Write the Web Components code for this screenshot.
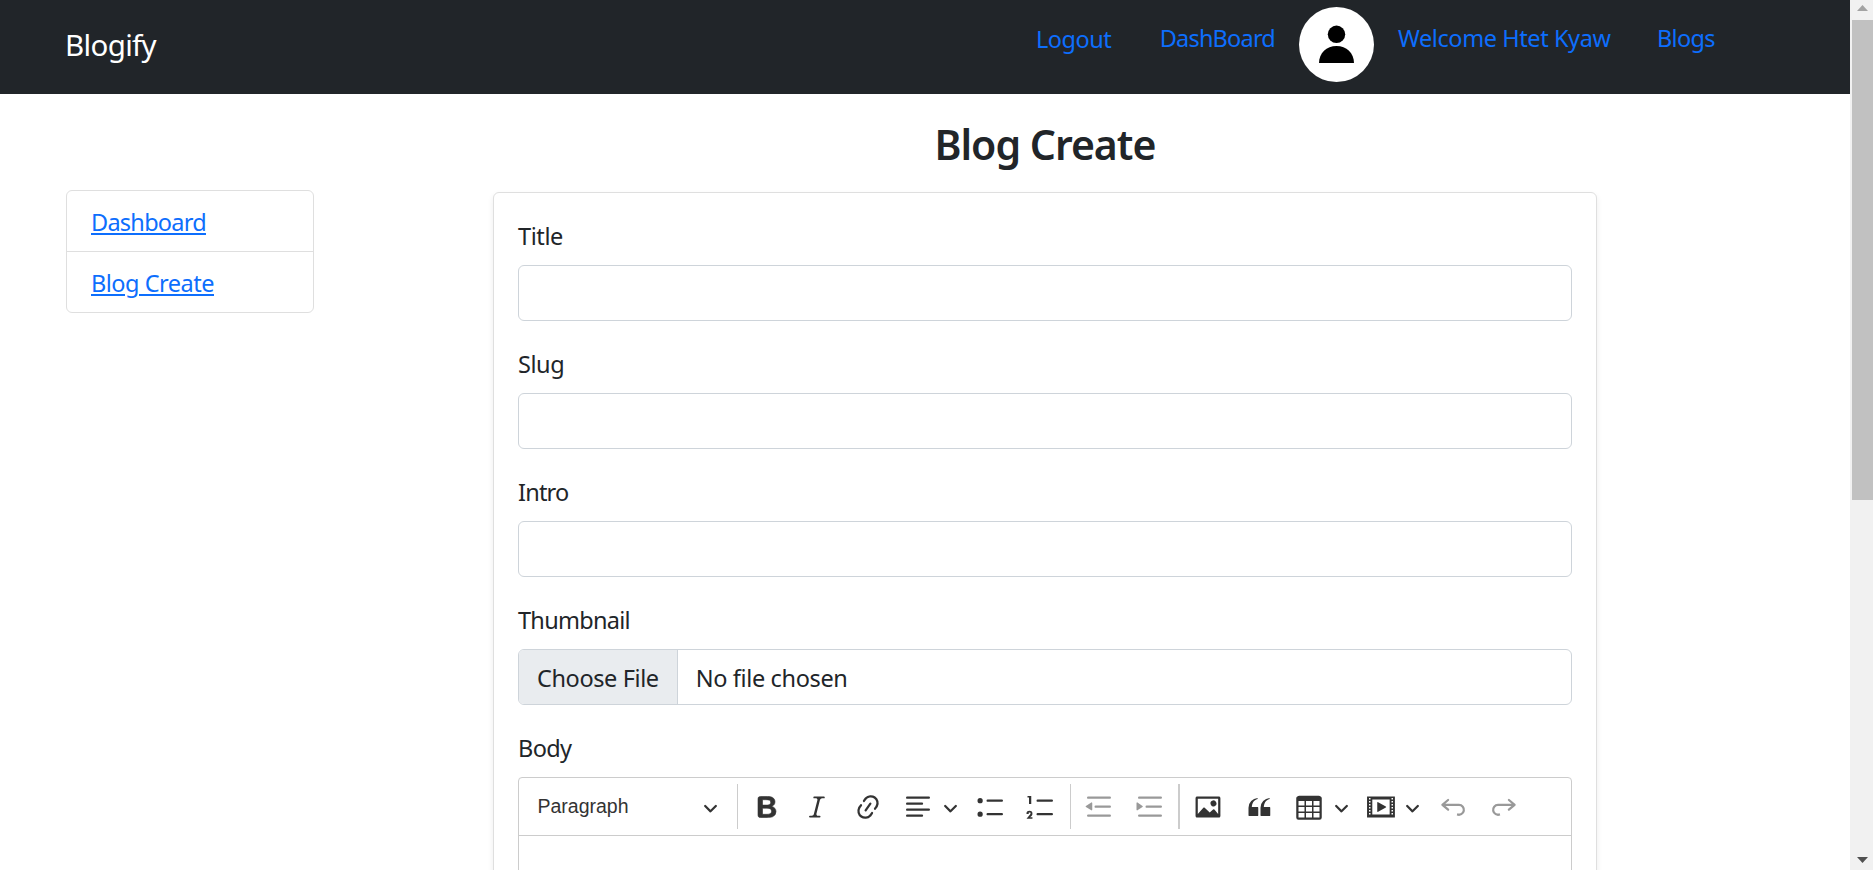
<!DOCTYPE html>
<html lang="en">
<head>
<meta charset="utf-8">
<title>Blogify</title>
<style>
html,body{margin:0;height:870px;overflow:hidden;background:#fff}
body{font-family:"Noto Sans","Open Sans",sans-serif;font-size:23.5px;font-weight:400;line-height:36px;color:#212529}
</style>
</head>
<body>
<blog-app></blog-app>
<script>
const define=(name,html,setup)=>customElements.define(name,class extends HTMLElement{
  connectedCallback(){
    if(this.shadowRoot)return;
    const t=document.createElement('template');
    t.innerHTML=html;
    this.attachShadow({mode:'open'}).appendChild(t.content.cloneNode(true));
    if(setup)setup(this,this.shadowRoot);
  }
});

/* A single line of text whose tracking is adjusted to the advance width in "w". */
define('fit-text','<style>:host{display:inline-block;white-space:nowrap}</style><slot></slot>',el=>{
  const n=el.textContent.length,w=+el.getAttribute('w');
  const fit=()=>{
    el.style.letterSpacing='0px';
    el.style.width='max-content';
    const natural=el.getBoundingClientRect().width;
    el.style.letterSpacing=((w-natural)/n)+'px';
    el.style.width=w+'px';
  };
  fit();
});

const chevron='<path d="M.941 4.523a.75.75 0 1 1 1.06-1.06l3.006 3.005 3.005-3.005a.75.75 0 1 1 1.06 1.06l-3.549 3.55a.75.75 0 0 1-1.168-.136L.941 4.523z"/>';
const line1='M7 5.75c0 .414.336.75.75.75h9.5a.75.75 0 1 0 0-1.5h-9.5a.75.75 0 0 0-.75.75z';
const line2='M7 14.75c0 .414.336.75.75.75h9.5a.75.75 0 1 0 0-1.5h-9.5a.75.75 0 0 0-.75.75z';
const dents='M2 3.75c0 .414.336.75.75.75h14.5a.75.75 0 1 0 0-1.5H2.75a.75.75 0 0 0-.75.75zm5 6c0 .414.336.75.75.75h9.5a.75.75 0 1 0 0-1.5h-9.5a.75.75 0 0 0-.75.75zM2.75 16.5h14.5a.75.75 0 1 0 0-1.5H2.75a.75.75 0 1 0 0 1.5z';
const icons={
bold:'M10.187 17H5.773c-.637 0-1.092-.138-1.364-.415-.273-.277-.409-.718-.409-1.323V4.738c0-.617.14-1.062.419-1.332.279-.27.73-.406 1.354-.406h4.68c.69 0 1.288.041 1.793.124.506.083.96.242 1.36.477.341.197.644.447.906.75a3.262 3.262 0 0 1 .808 2.162c0 1.401-.722 2.426-2.167 3.075C15.05 10.175 16 11.315 16 13.01a3.756 3.756 0 0 1-2.296 3.504 6.1 6.1 0 0 1-1.517.377c-.571.073-1.238.11-2 .11zm-.217-6.217H7v4.087h3.069c1.977 0 2.965-.69 2.965-2.072 0-.707-.256-1.22-.768-1.537-.512-.319-1.277-.478-2.296-.478zM7 5.13v3.619h2.606c.729 0 1.292-.067 1.69-.2a1.6 1.6 0 0 0 .91-.765c.165-.267.247-.566.247-.897 0-.707-.26-1.176-.778-1.409-.519-.232-1.31-.348-2.375-.348H7z',
italic:'M9.586 14.633l.021.004c-.036.335.095.655.393.962.082.083.173.15.274.201h1.474a.6.6 0 1 1 0 1.2H5.304a.6.6 0 0 1 0-1.2h1.15c.474-.07.809-.182 1.005-.334.157-.122.291-.32.404-.597l2.416-9.55a1.053 1.053 0 0 0-.281-.823 1.12 1.12 0 0 0-.442-.296H8.15a.6.6 0 0 1 0-1.2h6.443a.6.6 0 1 1 0 1.2h-1.195c-.376.056-.65.155-.823.296-.215.175-.423.439-.623.79l-2.366 9.347z',
link:'m11.077 15 .991-1.416a.75.75 0 1 1 1.229.86l-1.148 1.64a.748.748 0 0 1-.217.206 5.251 5.251 0 0 1-8.503-5.955.741.741 0 0 1 .12-.274l1.147-1.639a.75.75 0 1 1 1.228.86L4.933 10.7l.006.003a3.75 3.75 0 0 0 6.132 4.294l.006.004zm5.494-5.335a.748.748 0 0 1-.12.274l-1.147 1.639a.75.75 0 1 1-1.228-.86l.86-1.23a3.75 3.75 0 0 0-6.144-4.301l-.86 1.229a.75.75 0 0 1-1.229-.86l1.148-1.64a.748.748 0 0 1 .217-.206 5.251 5.251 0 0 1 8.503 5.955zm-4.563-2.532a.75.75 0 0 1 .184 1.045l-3.155 4.505a.75.75 0 1 1-1.229-.86l3.155-4.506a.75.75 0 0 1 1.045-.184z',
align:'M2 3.75c0 .414.336.75.75.75h14.5a.75.75 0 1 0 0-1.5H2.75a.75.75 0 0 0-.75.75zm0 8c0 .414.336.75.75.75h14.5a.75.75 0 1 0 0-1.5H2.75a.75.75 0 0 0-.75.75zm0 4c0 .414.336.75.75.75h9.929a.75.75 0 1 0 0-1.5H2.75a.75.75 0 0 0-.75.75zm0-8c0 .414.336.75.75.75h9.929a.75.75 0 1 0 0-1.5H2.75a.75.75 0 0 0-.75.75z',
bullets:line1+line2+'M1 5.75a1.75 1.75 0 1 1 3.5 0a1.75 1.75 0 0 1-3.5 0zM1 14.75a1.75 1.75 0 1 1 3.5 0a1.75 1.75 0 0 1-3.5 0z',
numbers:line1+line2+'M3.5 3v5H2V3.7H1v-1h2.5V3zM.343 17.857l2.59-3.257H2.92a.6.6 0 1 0-1.04 0H.302a2 2 0 1 1 3.995 0h-.001c-.048.405-.16.734-.333.988-.175.254-.59.692-1.244 1.312H4.3v1h-4l.043-.043z',
outdent:dents+'M4.868 6.95 1.28 9.358a.4.4 0 0 0 .013.661l3.59 2.207A.4.4 0 0 0 5.5 11.892V7.275a.4.4 0 0 0-.632-.326z',
indent:dents+'M1.632 6.95 5.02 9.358a.4.4 0 0 1-.013.661l-3.39 2.207A.4.4 0 0 1 1 11.892V7.275a.4.4 0 0 1 .632-.326z',
image:'M6.91 10.54c.26-.23.64-.21.88.03l3.36 3.14 2.23-2.06a.64.64 0 0 1 .87 0l2.52 2.97V4.5H3.2v10.12l3.71-4.08zm10.27-7.51c.6 0 1.09.47 1.09 1.05v11.84c0 .59-.49 1.06-1.09 1.06H2.79c-.6 0-1.09-.47-1.09-1.06V4.08c0-.58.49-1.05 1.1-1.05h14.38zm-5.22 5.56a1.96 1.96 0 1 1 3.4-1.96 1.96 1.96 0 0 1-3.4 1.96z',
quote:'M3 10.423a6.5 6.5 0 0 1 6.056-6.408l.038.67C6.448 5.423 5.354 7.663 5.22 10H9c.552 0 .5.432.5.986v4.511c0 .554-.448.503-1 .503h-5c-.552 0-.5-.449-.5-1.003v-4.574zm8 0a6.5 6.5 0 0 1 6.056-6.408l.038.67c-2.646.739-3.74 2.979-3.873 5.315H17c.552 0 .5.432.5.986v4.511c0 .554-.448.503-1 .503h-5c-.552 0-.5-.449-.5-1.003v-4.574z',
table:'M3 6v3h4V6H3zm0 4v3h4v-3H3zm0 4v3h4v-3H3zm5 3h4v-3H8v3zm5 0h4v-3h-4v3zm4-4v-3h-4v3h4zm0-4V6h-4v3h4zm1.5 8a1.5 1.5 0 0 1-1.5 1.5H3A1.5 1.5 0 0 1 1.5 17V4c.222-.863 1.068-1.5 2-1.5h13c.932 0 1.778.637 2 1.5v13zM12 13v-3H8v3h4zm0-4V6H8v3h4z',
media:'M18.68 3.03c.6 0 .59-.03.59.55v12.84c0 .59.01.56-.59.56H1.29c-.6 0-.59.03-.59-.56V3.58c0-.58-.01-.55.6-.55h17.38zM15.77 15V5H4.2v10h11.57zM2 4v1h1V4H2zm0 2v1h1V6H2zm0 2v1h1V8H2zm0 2v1h1v-1H2zm0 2v1h1v-1H2zm0 2v1h1v-1H2zM17 4v1h1V4h-1zm0 2v1h1V6h-1zm0 2v1h1V8h-1zm0 2v1h1v-1h-1zm0 2v1h1v-1h-1zm0 2v1h1v-1h-1zM7.5 7.177a.4.4 0 0 1 .593-.351l5.133 2.824a.4.4 0 0 1 0 .7l-5.133 2.824a.4.4 0 0 1-.593-.35V7.176v.001z',
undo:'m5.042 9.367 2.189 1.837a.75.75 0 0 1-.965 1.149l-3.788-3.18a.747.747 0 0 1-.21-.284.75.75 0 0 1 .17-.945L6.23 4.762a.75.75 0 1 1 .964 1.15L4.863 7.866h8.917A.75.75 0 0 1 14 7.9a4 4 0 1 1-1.477 7.718l.344-1.489a2.5 2.5 0 1 0 1.094-4.73l.008-.032H5.042z',
redo:'m14.958 9.367-2.189 1.837a.75.75 0 0 0 .965 1.149l3.788-3.18a.747.747 0 0 0 .21-.284.75.75 0 0 0-.17-.945L13.77 4.762a.75.75 0 1 0-.964 1.15l2.331 1.955H6.22A.75.75 0 0 0 6 7.9a4 4 0 1 0 1.477 7.718l-.344-1.489A2.5 2.5 0 1 1 6.039 9.4l-.008-.032h8.927z'
};
/* Toolbar glyph: "name" picks the drawing, "gap" is the space before it. */
define('tool-icon','<style>:host{display:block;flex:none;width:30px;height:30px;color:#333}:host([off]){color:#999}:host([name=chevron]){width:15px;height:15px}:host([name=bold]) svg{stroke:currentColor;stroke-width:.4}svg{display:block;width:100%;height:100%;fill:currentColor}</style><svg></svg>',(el,root)=>{
  const name=el.getAttribute('name'),svg=root.querySelector('svg');
  el.style.marginLeft=(el.getAttribute('gap')||0)+'px';
  svg.setAttribute('viewBox',name==='chevron'?'0 0 10 10':'0 0 20 20');
  svg.innerHTML=name==='chevron'?chevron:`<path d="${icons[name]}"/>`;
});

define('nav-bar',`<style>
:host{display:flex;height:94px;background:#212529;box-sizing:border-box;padding-left:65px;align-items:flex-start}
.brand{font-size:29.5px;line-height:45px;color:#fff;margin-top:22px}
nav{display:flex;margin-left:880px;color:#0d6efd}
nav fit-text{margin-top:20px}
.out{margin-right:48.5px}
nav .out{margin-top:21px}
svg{display:block;width:75px;height:75px;margin:7px 24px 0}
.last{margin-left:46.5px}
</style>
<fit-text class="brand" w="91">Blogify</fit-text>
<nav><fit-text class="out" w="75.2">Logout</fit-text><fit-text w="115.3">DashBoard</fit-text>
<svg viewBox="0 0 75 75"><circle cx="37.5" cy="37.5" r="37.5" fill="#fff"/><circle cx="37.5" cy="27.3" r="8.7"/><path d="M20 56c0-10 7.500-17 17.500-17s17.500 7 17.500 17z"/></svg>
<fit-text w="212.5">Welcome Htet Kyaw</fit-text><fit-text class="last" w="57.9">Blogs</fit-text></nav>`);

define('side-menu',`<style>
:host{display:block;box-sizing:border-box;width:248px;border:1px solid #dfdfdf;border-radius:6px}
div{height:60px;padding-left:24px;border-top:1px solid #dfdfdf}
div:first-of-type{border-top:0}
a{display:block;width:max-content;color:#0d6efd;padding-top:12px;line-height:38px}
fit-text{text-decoration:underline;text-decoration-thickness:2px;text-underline-offset:2px}
</style><div><a><fit-text w="115">Dashboard</fit-text></a></div><div><a><fit-text w="123">Blog Create</fit-text></a></div>`);

define('form-field',`<style>
:host{display:block;margin-bottom:24px}
label{display:block;height:36px;line-height:38px;margin-bottom:12px}
.box{box-sizing:border-box;height:56px;border:1px solid #ced4da;border-radius:6px;background:#fff;overflow:hidden}
</style><label><slot name="label"></slot></label><div class="box"><slot></slot></div>`);

define('file-picker',`<style>
:host{display:flex;height:54px;line-height:56px}
.btn{background:#e9ecef;padding:0 18px;border-right:1px solid #ced4da;margin-right:18px}
</style><span class="btn"><fit-text w="121.700">Choose File</fit-text></span><fit-text w="151.8">No file chosen</fit-text>`);

define('tool-bar',`<style>
:host{display:flex;align-items:center;height:57px;border-bottom:1px solid #ccc;padding-left:18.5px;font:19.5px/55px "Liberation Sans",Arial,sans-serif;color:#333}
i{display:block;flex:none;width:1px;height:45px;background:#ccc}
tool-icon{position:relative;top:.5px}
</style>
<span style="width:91px">Paragraph</span>
<tool-icon name="chevron" gap="74"></tool-icon>
<i style="margin-left:19.5px"></i>
<tool-icon name="bold" gap="13.7"></tool-icon>
<tool-icon name="italic" gap="20.5"></tool-icon>
<tool-icon name="link" gap="20.8"></tool-icon>
<tool-icon name="align" gap="20"></tool-icon>
<tool-icon name="chevron" gap="10"></tool-icon>
<tool-icon name="bullets" gap="18"></tool-icon>
<tool-icon name="numbers" gap="20"></tool-icon>
<i style="margin-left:14px"></i>
<tool-icon name="outdent" gap="13" off></tool-icon>
<tool-icon name="indent" gap="21" off></tool-icon>
<i style="margin-left:13px;width:2px"></i>
<tool-icon name="image" gap="13"></tool-icon>
<tool-icon name="quote" gap="21"></tool-icon>
<tool-icon name="table" gap="20"></tool-icon>
<tool-icon name="chevron" gap="10"></tool-icon>
<tool-icon name="media" gap="17"></tool-icon>
<tool-icon name="chevron" gap="9"></tool-icon>
<tool-icon name="undo" gap="18" off></tool-icon>
<tool-icon name="redo" gap="21" off></tool-icon>`);

define('text-editor',`<style>
:host{display:block;border:1px solid #ccc;border-radius:4px 4px 0 0;height:500px}
</style><tool-bar></tool-bar>`);

define('blog-form',`<style>
:host{display:block;box-sizing:border-box;width:1104px;height:900px;border:1px solid #dfdfdf;border-radius:6px;padding:24px;box-shadow:0 3px 6px rgba(0,0,0,.075);background:#fff}
.label{height:36px;line-height:38px;margin-bottom:12px}
</style>
<form-field><fit-text slot="label" w="44.9">Title</fit-text></form-field>
<form-field><fit-text slot="label" w="46.2">Slug</fit-text></form-field>
<form-field><fit-text slot="label" w="50.5">Intro</fit-text></form-field>
<form-field><fit-text slot="label" w="111.9">Thumbnail</fit-text><file-picker></file-picker></form-field>
<div class="label"><fit-text w="53.4">Body</fit-text></div>
<text-editor></text-editor>`);

define('scroll-rail',`<style>
:host{display:flex;flex-direction:column;box-sizing:border-box;background:#f1f1f1;height:870px;padding:5px 0 7px 2px}
svg{display:block;width:11px;height:6px;margin-left:5px}
.thumb{height:480px;margin:9px 0 auto;background:#c1c1c1}
</style><svg viewBox="0 0 11 6"><path d="M0 6L5.500 0 11 6z" fill="#a3a3a3"/></svg><div class="thumb"></div><svg viewBox="0 0 11 6"><path d="M0 0h11L5.500 6z" fill="#505050"/></svg>`);

define('blog-app',`<style>
:host{display:grid;grid-template-columns:1850px 23px;height:870px;overflow:hidden}
.page{height:870px;overflow:hidden}
main{display:flex;align-items:flex-start;padding-left:66px}
side-menu{margin-top:96px}
section{margin-left:179px;width:1104px}
h3{margin:0;height:98px;padding-top:23px;box-sizing:border-box;text-align:center;font-size:41px;font-weight:600;line-height:54px}
</style>
<div class="page"><nav-bar></nav-bar><main><side-menu></side-menu><section><h3><fit-text w="221">Blog Create</fit-text></h3><blog-form></blog-form></section></main></div>
<scroll-rail></scroll-rail>`);
</script>
</body>
</html>
